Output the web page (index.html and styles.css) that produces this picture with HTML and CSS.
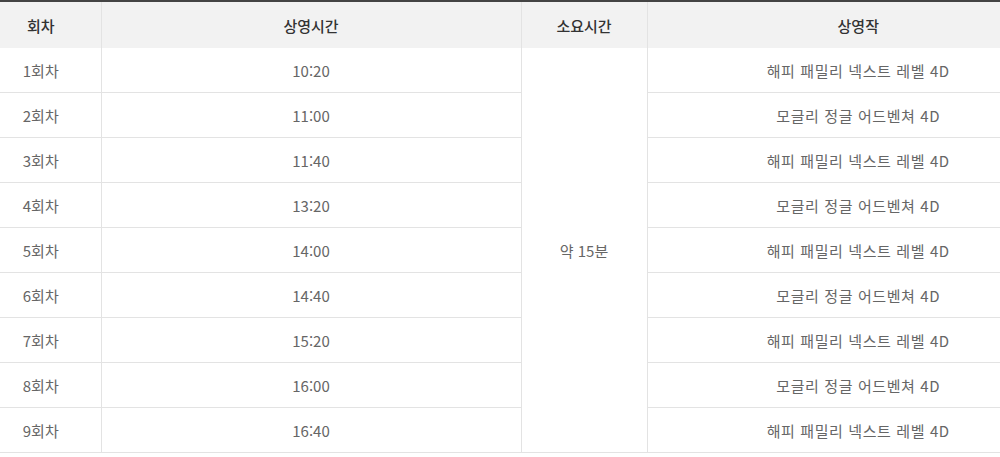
FILE: index.html
```html
<!DOCTYPE html>
<html lang="ko">
<head>
<meta charset="utf-8">
<link rel="stylesheet" href="styles.css">
</head>
<body>
<div class="wrap">
<table class="sched">
<colgroup>
<col class="c1"><col class="c2"><col class="c3"><col class="c4">
</colgroup>
<thead>
<tr><th>회차</th><th>상영시간</th><th>소요시간</th><th>상영작</th></tr>
</thead>
<tbody>
<tr><td>1회차</td><td>10:20</td><td rowspan="9">약 15분</td><td class="title">해피 패밀리 넥스트 레벨 4D</td></tr>
<tr><td>2회차</td><td>11:00</td><td class="title">모글리 정글 어드벤쳐 4D</td></tr>
<tr><td>3회차</td><td>11:40</td><td class="title">해피 패밀리 넥스트 레벨 4D</td></tr>
<tr><td>4회차</td><td>13:20</td><td class="title">모글리 정글 어드벤쳐 4D</td></tr>
<tr><td>5회차</td><td>14:00</td><td class="title">해피 패밀리 넥스트 레벨 4D</td></tr>
<tr><td>6회차</td><td>14:40</td><td class="title">모글리 정글 어드벤쳐 4D</td></tr>
<tr><td>7회차</td><td>15:20</td><td class="title">해피 패밀리 넥스트 레벨 4D</td></tr>
<tr><td>8회차</td><td>16:00</td><td class="title">모글리 정글 어드벤쳐 4D</td></tr>
<tr><td>9회차</td><td>16:40</td><td class="title">해피 패밀리 넥스트 레벨 4D</td></tr>
</tbody>
</table>
</div>
</body>
</html>
```
FILE: styles.css
```css
html, body {
  margin: 0;
  padding: 0;
  background: #fff;
}
.wrap {
  width: 1000px;
  overflow: hidden;
}
.sched {
  margin-left: -19px;
  width: 1088px;
  border-collapse: collapse;
  table-layout: fixed;
  border-top: 2px solid #444;
  font-family: "Noto Sans CJK KR", "Noto Sans", sans-serif;
  font-size: 15px;
  color: #666;
}
.c1 { width: 120px; }
.c2 { width: 420px; }
.c3 { width: 126px; }
.c4 { width: 422px; }
.sched th {
  height: 46px;
  padding: 0;
  background: #f2f2f2;
  color: #333;
  font-weight: 500;
  text-align: center;
  border-left: 1px solid #e3e3e3;
}
.sched td {
  height: 44px;
  padding: 0;
  text-align: center;
  border-left: 1px solid #e3e3e3;
  border-bottom: 1px solid #e3e3e3;
}
.sched th:first-child,
.sched td:first-child {
  border-left: none;
}
.sched td.title {
  letter-spacing: 0.6px;
}
```
